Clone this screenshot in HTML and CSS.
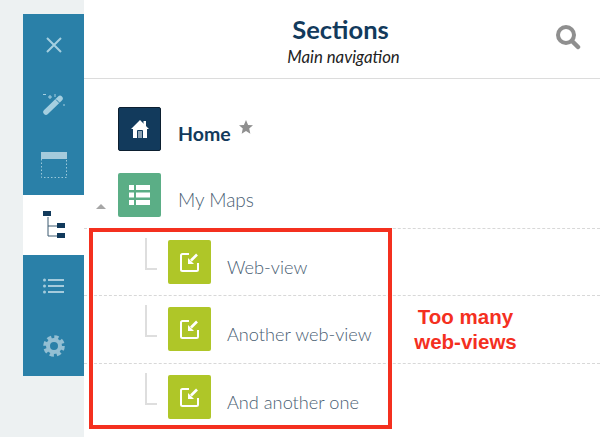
FILE: index.html
```html
<!DOCTYPE html>
<html lang="en">
<head>
    <meta charset="UTF-8">
    <title>Sections</title>
    <link rel="stylesheet" href="styles.css">
</head>
<body>
    <div class="page">
        <!-- left toolbar -->
        <div class="gutter">
            <div class="sidebar">
                <div class="tool">
                    <svg class="nudge" width="16" height="16" viewBox="0 0 16 16"><path d="M1 1 L15 15 M15 1 L1 15" stroke="#a5cfe0" stroke-width="2" fill="none"/></svg>
                </div>
                <div class="tool">
                    <svg width="22" height="22" viewBox="0 0 22 22">
                        <path d="M3 19 L17 5.5" stroke="#a5cfe0" stroke-width="5.5" stroke-linecap="round" fill="none"/>
                        <path d="M13 6.5 L16.5 10" stroke="#2a80a8" stroke-width="1" fill="none"/>
                        <path d="M7 2 V6 M5 4 H9 M12 1 V4 M0 1.5 H3 M21 11 V13" stroke="#a5cfe0" stroke-width="1" fill="none"/>
                    </svg>
                </div>
                <div class="tool">
                    <svg width="26" height="26" viewBox="0 0 26 26">
                        <rect x="0" y="0" width="26" height="7" fill="#a5cbdc"/>
                        <path d="M0.5 7 V25.5 H25.5 V7" fill="none" stroke="#9cc8da" stroke-dasharray="1.5 2"/>
                    </svg>
                </div>
                <div class="tool active">
                    <svg width="22" height="28" viewBox="0 0 22 28">
                        <path d="M5 6 V25 H14 M5 15 H14" stroke="#3d5a70" fill="none"/>
                        <rect x="0" y="0" width="8" height="5" fill="#123a5c"/>
                        <rect x="14" y="12" width="8" height="5" fill="#123a5c"/>
                        <rect x="14" y="22" width="8" height="5" fill="#123a5c"/>
                    </svg>
                </div>
                <div class="tool">
                    <svg class="nudge" width="21" height="16" viewBox="0 0 21 16">
                        <path d="M5 2 H21 M5 8 H21 M5 14 H21" stroke="#a5cbdc" stroke-width="2" fill="none"/>
                        <circle cx="1.5" cy="2" r="1.5" fill="#a5cbdc"/>
                        <circle cx="1.5" cy="8" r="1.5" fill="#a5cbdc"/>
                        <circle cx="1.5" cy="14" r="1.5" fill="#a5cbdc"/>
                    </svg>
                </div>
                <div class="tool">
                    <svg width="22" height="22" viewBox="0 0 22 22">
                        <circle cx="11" cy="11" r="6" fill="none" stroke="#93bfd3" stroke-width="4"/>
                        <circle cx="11" cy="11" r="9" fill="none" stroke="#93bfd3" stroke-width="3.6" stroke-dasharray="4.2 2.87"/>
                    </svg>
                </div>
            </div>
        </div>

        <div class="main">
            <div class="header">
                <div class="titles">
                    <h1>Sections</h1>
                    <p>Main navigation</p>
                </div>
                <svg class="search" width="26" height="26" viewBox="0 0 26 26">
                    <circle cx="11" cy="11" r="8" fill="none" stroke="#8f8f8f" stroke-width="4"/>
                    <path d="M17 17 L23 23" stroke="#8f8f8f" stroke-width="4.5" stroke-linecap="round"/>
                </svg>
            </div>

            <div class="tree">
                <div class="row-home">
                    <div class="icon icon-home">
                        <svg width="18" height="18" viewBox="0 0 18 18">
                            <path d="M9 0 L18 9 H16 V18 H2 V9 H0 Z" fill="#fff"/>
                            <rect x="12.5" y="1" width="2.5" height="5" fill="#fff"/>
                            <path d="M6.5 18 V10.5 H11.5 V18" fill="#8fa3b3" stroke="#123a5c"/>
                        </svg>
                    </div>
                    <span class="home-label">Home</span>
                    <svg class="star" width="14" height="14" viewBox="0 0 20 20"><polygon points="10,0 13,7 20,7.6 14.6,12.2 16.2,19.5 10,15.6 3.8,19.5 5.4,12.2 0,7.6 7,7" fill="#8f8f8f"/></svg>
                </div>
                <div class="row-maps">
                    <span class="caret"></span>
                    <div class="icon icon-maps">
                        <svg width="21" height="20" viewBox="0 0 21 20">
                            <path d="M0 0 H5 V5 H0 Z M7 0 H21 V5 H7 Z M0 7.5 H5 V12.5 H0 Z M7 7.5 H21 V12.5 H7 Z M0 15 H5 V20 H0 Z M7 15 H21 V20 H7 Z" fill="#fff"/>
                        </svg>
                    </div>
                    <span class="label">My Maps</span>
                </div>
                <div class="row-child first">
                    <span class="elbow"></span>
                    <div class="icon icon-view">
                        <svg width="19" height="19" viewBox="0 0 19 19">
                            <path d="M9 1 H2.5 Q1 1 1 2.5 V16.5 Q1 18 2.5 18 H16.5 Q18 18 18 16.5 V10" fill="none" stroke="#fff" stroke-width="2"/>
                            <path d="M17 1.5 L11 7.5" stroke="#fff" stroke-width="2.6" fill="none"/>
                            <path d="M8 5 V11 H14 Z" fill="#fff"/>
                        </svg>
                    </div>
                    <span class="label">Web-view</span>
                </div>
                <div class="row-child">
                    <span class="elbow"></span>
                    <div class="icon icon-view">
                        <svg width="19" height="19" viewBox="0 0 19 19">
                            <path d="M9 1 H2.5 Q1 1 1 2.5 V16.5 Q1 18 2.5 18 H16.5 Q18 18 18 16.5 V10" fill="none" stroke="#fff" stroke-width="2"/>
                            <path d="M17 1.5 L11 7.5" stroke="#fff" stroke-width="2.6" fill="none"/>
                            <path d="M8 5 V11 H14 Z" fill="#fff"/>
                        </svg>
                    </div>
                    <span class="label">Another web-view</span>
                </div>
                <div class="row-child last">
                    <span class="elbow"></span>
                    <div class="icon icon-view">
                        <svg width="19" height="19" viewBox="0 0 19 19">
                            <path d="M9 1 H2.5 Q1 1 1 2.5 V16.5 Q1 18 2.5 18 H16.5 Q18 18 18 16.5 V10" fill="none" stroke="#fff" stroke-width="2"/>
                            <path d="M17 1.5 L11 7.5" stroke="#fff" stroke-width="2.6" fill="none"/>
                            <path d="M8 5 V11 H14 Z" fill="#fff"/>
                        </svg>
                    </div>
                    <span class="label">And another one</span>
                </div>
            </div>
        </div>

        <!-- annotation drawn over the screenshot -->
        <div class="red-box"></div>
        <div class="note">Too many<br>web-views</div>
    </div>
</body>
</html>
```

FILE: styles.css
```css
body, html {
    margin: 0;
    padding: 0;
    width: 100%;
    height: 100%;
    overflow: hidden;
    background-color: #fff;
    font-family: Lato, "Liberation Sans", sans-serif;
}
.page {
    position: relative;
    display: flex;
    width: 600px;
    height: 437px;
    overflow: hidden;
}
.gutter {
    width: 84px;
    flex-shrink: 0;
    box-sizing: border-box;
    padding: 14px 0 0 23px;
    background-color: #edf1f2;
}
.sidebar {
    display: flex;
    flex-direction: column;
    height: 362px;
    background-color: #2a80a8;
}
.tool {
    flex: 1;
    display: flex;
    align-items: center;
    justify-content: center;
}
.tool.active {
    background-color: #fff;
}
.nudge {
    margin-top: 2px;
}
.main {
    flex: 1;
    min-width: 0;
}
.header {
    position: relative;
    height: 78px;
    border-bottom: 1px solid #dcdcdc;
    display: flex;
    justify-content: center;
}
.titles {
    text-align: center;
    padding-top: 14px;
    margin-left: 3px;
}
.titles h1 {
    margin: 0 6px 0 0;
    font-size: 25.5px;
    line-height: 30px;
    font-weight: 700;
    color: #123a5c;
}
.titles p {
    margin: 1px 0 0;
    font-size: 16.8px;
    line-height: 24px;
    font-style: italic;
    color: #222;
}
.search {
    position: absolute;
    right: 19px;
    top: 24px;
}
.tree {
    padding-top: 28px;
}
.icon {
    width: 43px;
    height: 44px;
    flex-shrink: 0;
    box-sizing: border-box;
    border-radius: 2px;
    display: flex;
    align-items: center;
    justify-content: center;
}
.icon-home {
    background-color: #123a5c;
    border: 1px solid #0c1f30;
}
.icon-maps {
    background-color: #5bae86;
}
.icon-view {
    background-color: #afc628;
}
.row-home {
    display: flex;
    align-items: flex-start;
    height: 66px;
    padding-left: 34px;
}
.home-label {
    margin: 14px 0 0 17px;
    font-size: 19.5px;
    line-height: 26px;
    font-weight: 700;
    color: #123a5c;
}
.star {
    margin: 13px 0 0 8px;
}
.row-maps {
    display: flex;
    align-items: flex-start;
    height: 55px;
    padding-left: 12px;
    border-bottom: 1px dashed #d8d8d8;
}
.caret {
    width: 0;
    height: 0;
    margin: 31px 12px 0 0;
    border-left: 5px solid transparent;
    border-right: 5px solid transparent;
    border-bottom: 5px solid #a6a6a6;
}
.label {
    margin: 14px 0 0 17px;
    font-size: 19px;
    line-height: 26px;
    font-weight: 300;
    color: #4a6073;
}
.row-child {
    display: flex;
    align-items: flex-start;
    height: 68px;
    padding: 11px 0 0 61px;
    box-sizing: border-box;
    border-bottom: 1px dashed #d8d8d8;
}
.row-child.first {
    height: 67px;
}
.row-child.last {
    border-bottom: 0;
}
.row-child .label {
    margin: 14px 0 0 16px;
    font-size: 18.2px;
}
.elbow {
    width: 10px;
    height: 30px;
    margin: -2px 11px 0 0;
    border-left: 2px solid #dedede;
    border-bottom: 2px solid #dedede;
}
.red-box {
    position: absolute;
    left: 89px;
    top: 228px;
    width: 303px;
    height: 201px;
    box-sizing: border-box;
    border: 4px solid #f4301f;
}
.note {
    position: absolute;
    left: 400px;
    top: 304px;
    width: 131px;
    text-align: center;
    font-family: "Liberation Sans", Arial, sans-serif;
    font-size: 20.5px;
    line-height: 25px;
    font-weight: 700;
    color: #f4301f;
}
```
